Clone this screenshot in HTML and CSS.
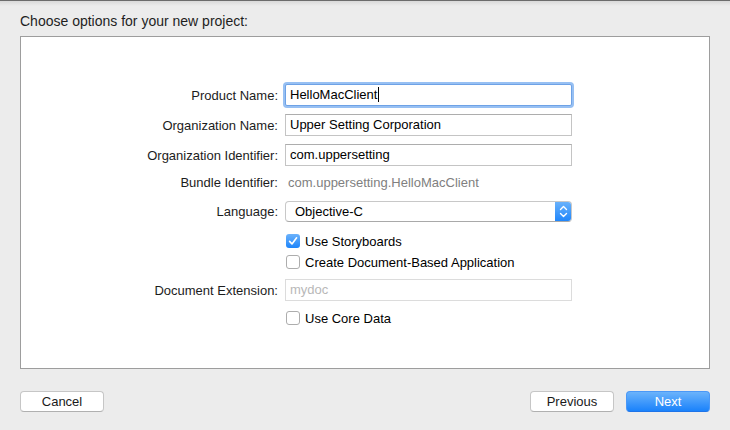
FILE: index.html
```html
<!DOCTYPE html>
<html>
<head>
<meta charset="utf-8">
<link rel="stylesheet" href="styles.css">
</head>
<body>
<div class="window">
  <div class="title">Choose options for your new project:</div>
  <div class="panel">
    <div class="row">
      <div class="label">Product Name:</div>
      <div class="field focused"><span class="caret">HelloMacClient</span></div>
    </div>
    <div class="row gap8">
      <div class="label">Organization Name:</div>
      <div class="field">Upper Setting Corporation</div>
    </div>
    <div class="row gap8">
      <div class="label">Organization Identifier:</div>
      <div class="field">com.uppersetting</div>
    </div>
    <div class="row gap5">
      <div class="label">Bundle Identifier:</div>
      <div class="static">com.uppersetting.HelloMacClient</div>
    </div>
    <div class="row gap8 h21">
      <div class="label">Language:</div>
      <div class="popup">
        <span class="popup-text">Objective-C</span>
        <span class="stepper">
          <svg width="17" height="21" viewBox="0 0 17 21"><polyline points="5.5,8.5 8.5,5.5 11.5,8.5" fill="none" stroke="#fff" stroke-width="1.4" stroke-linecap="round" stroke-linejoin="round"/><polyline points="5.5,12.5 8.5,15.5 11.5,12.5" fill="none" stroke="#fff" stroke-width="1.4" stroke-linecap="round" stroke-linejoin="round"/></svg>
        </span>
      </div>
    </div>
    <div class="row gap9 h20">
      <div class="label"></div>
      <div class="check"><span class="box checked"><svg width="14" height="14" viewBox="0 0 14 14"><path d="M3.6 7.4 L6 9.9 L10.6 3.8" fill="none" stroke="#fff" stroke-width="1.6" stroke-linecap="round" stroke-linejoin="round"/></svg></span>Use Storyboards</div>
    </div>
    <div class="row gap1 h20">
      <div class="label"></div>
      <div class="check"><span class="box"></span>Create Document-Based Application</div>
    </div>
    <div class="row gap7">
      <div class="label">Document Extension:</div>
      <div class="field disabled">mydoc</div>
    </div>
    <div class="row gap7 h20">
      <div class="label"></div>
      <div class="check"><span class="box"></span>Use Core Data</div>
    </div>
  </div>
  <div class="footer">
    <button class="btn">Cancel</button>
    <div class="right">
      <button class="btn">Previous</button>
      <button class="btn primary">Next</button>
    </div>
  </div>
</div>
</body>
</html>
```
FILE: styles.css
```css
html, body {
  margin: 0;
  padding: 0;
}
body {
  background: #ececec;
  font-family: "Liberation Sans", Arial, sans-serif;
  font-size: 13px;
  color: #1a1a1a;
}
.window {
  width: 730px;
  height: 430px;
  box-sizing: border-box;
  border-top: 1px solid #6c6c6c;
  background: linear-gradient(#d9d9d9, #ececec 5px);
  padding: 0 20px;
  display: flex;
  flex-direction: column;
}
.title {
  margin-top: 12px;
  height: 16px;
  line-height: 16px;
  margin-bottom: 7px;
  font-size: 14px;
  color: #1e1e1e;
}
.panel {
  height: 333px;
  box-sizing: border-box;
  background: #fff;
  border: 1px solid #9d9d9d;
  padding-top: 47px;
  display: flex;
  flex-direction: column;
}
.row {
  display: grid;
  grid-template-columns: 257px 287px;
  column-gap: 7px;
  align-items: center;
  height: 22px;
}
.h21 { height: 21px; }
.h20 { height: 20px; }
.gap1 { margin-top: 1px; }
.gap5 { margin-top: 5px; }
.gap7 { margin-top: 7px; }
.gap8 { margin-top: 8px; }
.gap9 { margin-top: 9px; }
.label {
  text-align: right;
  color: #1c1c1c;
}
.field {
  height: 22px;
  box-sizing: border-box;
  border: 1px solid #c4c4c4;
  border-top-color: #adadad;
  padding: 0 4px;
  line-height: 20px;
  color: #000;
  background: #fff;
}
.field.focused {
  border-color: #6ea2e6;
  border-radius: 2px;
  box-shadow: 0 0 0 2px #97c0f3;
}
.caret {
  border-right: 1px solid #000;
  padding-right: 1px;
}
.field.disabled {
  border-color: #dcdcdc;
  color: #b8b8b8;
}
.static {
  padding-left: 3px;
  color: #808080;
}
.popup {
  height: 21px;
  box-sizing: border-box;
  border: 1px solid #c8c8c8;
  border-bottom-color: #a9a9a9;
  border-radius: 4px;
  display: flex;
  align-items: center;
  justify-content: space-between;
  background: #fff;
  overflow: hidden;
}
.popup-text {
  padding-left: 9px;
  color: #000;
}
.stepper {
  width: 17px;
  height: 21px;
  margin-right: -1px;
  margin-top: -1px;
  margin-bottom: -1px;
  background: linear-gradient(#6db4fb, #1c84fb);
  display: flex;
  border-radius: 0 4px 4px 0;
}
.check {
  display: flex;
  align-items: center;
  color: #000;
  padding-left: 1px;
}
.box {
  width: 14px;
  height: 14px;
  box-sizing: border-box;
  border: 1px solid #adadad;
  border-radius: 3px;
  background: #fff;
  margin-right: 5px;
  display: flex;
}
.box.checked {
  border: none;
  background: linear-gradient(#6cb2fb, #1d85fb);
}
.footer {
  margin-top: 22px;
  display: flex;
  justify-content: space-between;
}
.right {
  display: flex;
  gap: 12px;
}
.btn {
  width: 84px;
  height: 21px;
  box-sizing: border-box;
  font-family: "Liberation Sans", Arial, sans-serif;
  font-size: 13px;
  color: #1a1a1a;
  background: #fff;
  border: 1px solid #c6c6c6;
  border-bottom-color: #b0b0b0;
  border-radius: 4px;
  padding: 0;
  line-height: 19px;
}
.btn.primary {
  background: linear-gradient(#6bb3fb, #1a82fb);
  border-color: #4a98f7;
  border-bottom-color: #1f74e8;
  color: #fff;
}
```
